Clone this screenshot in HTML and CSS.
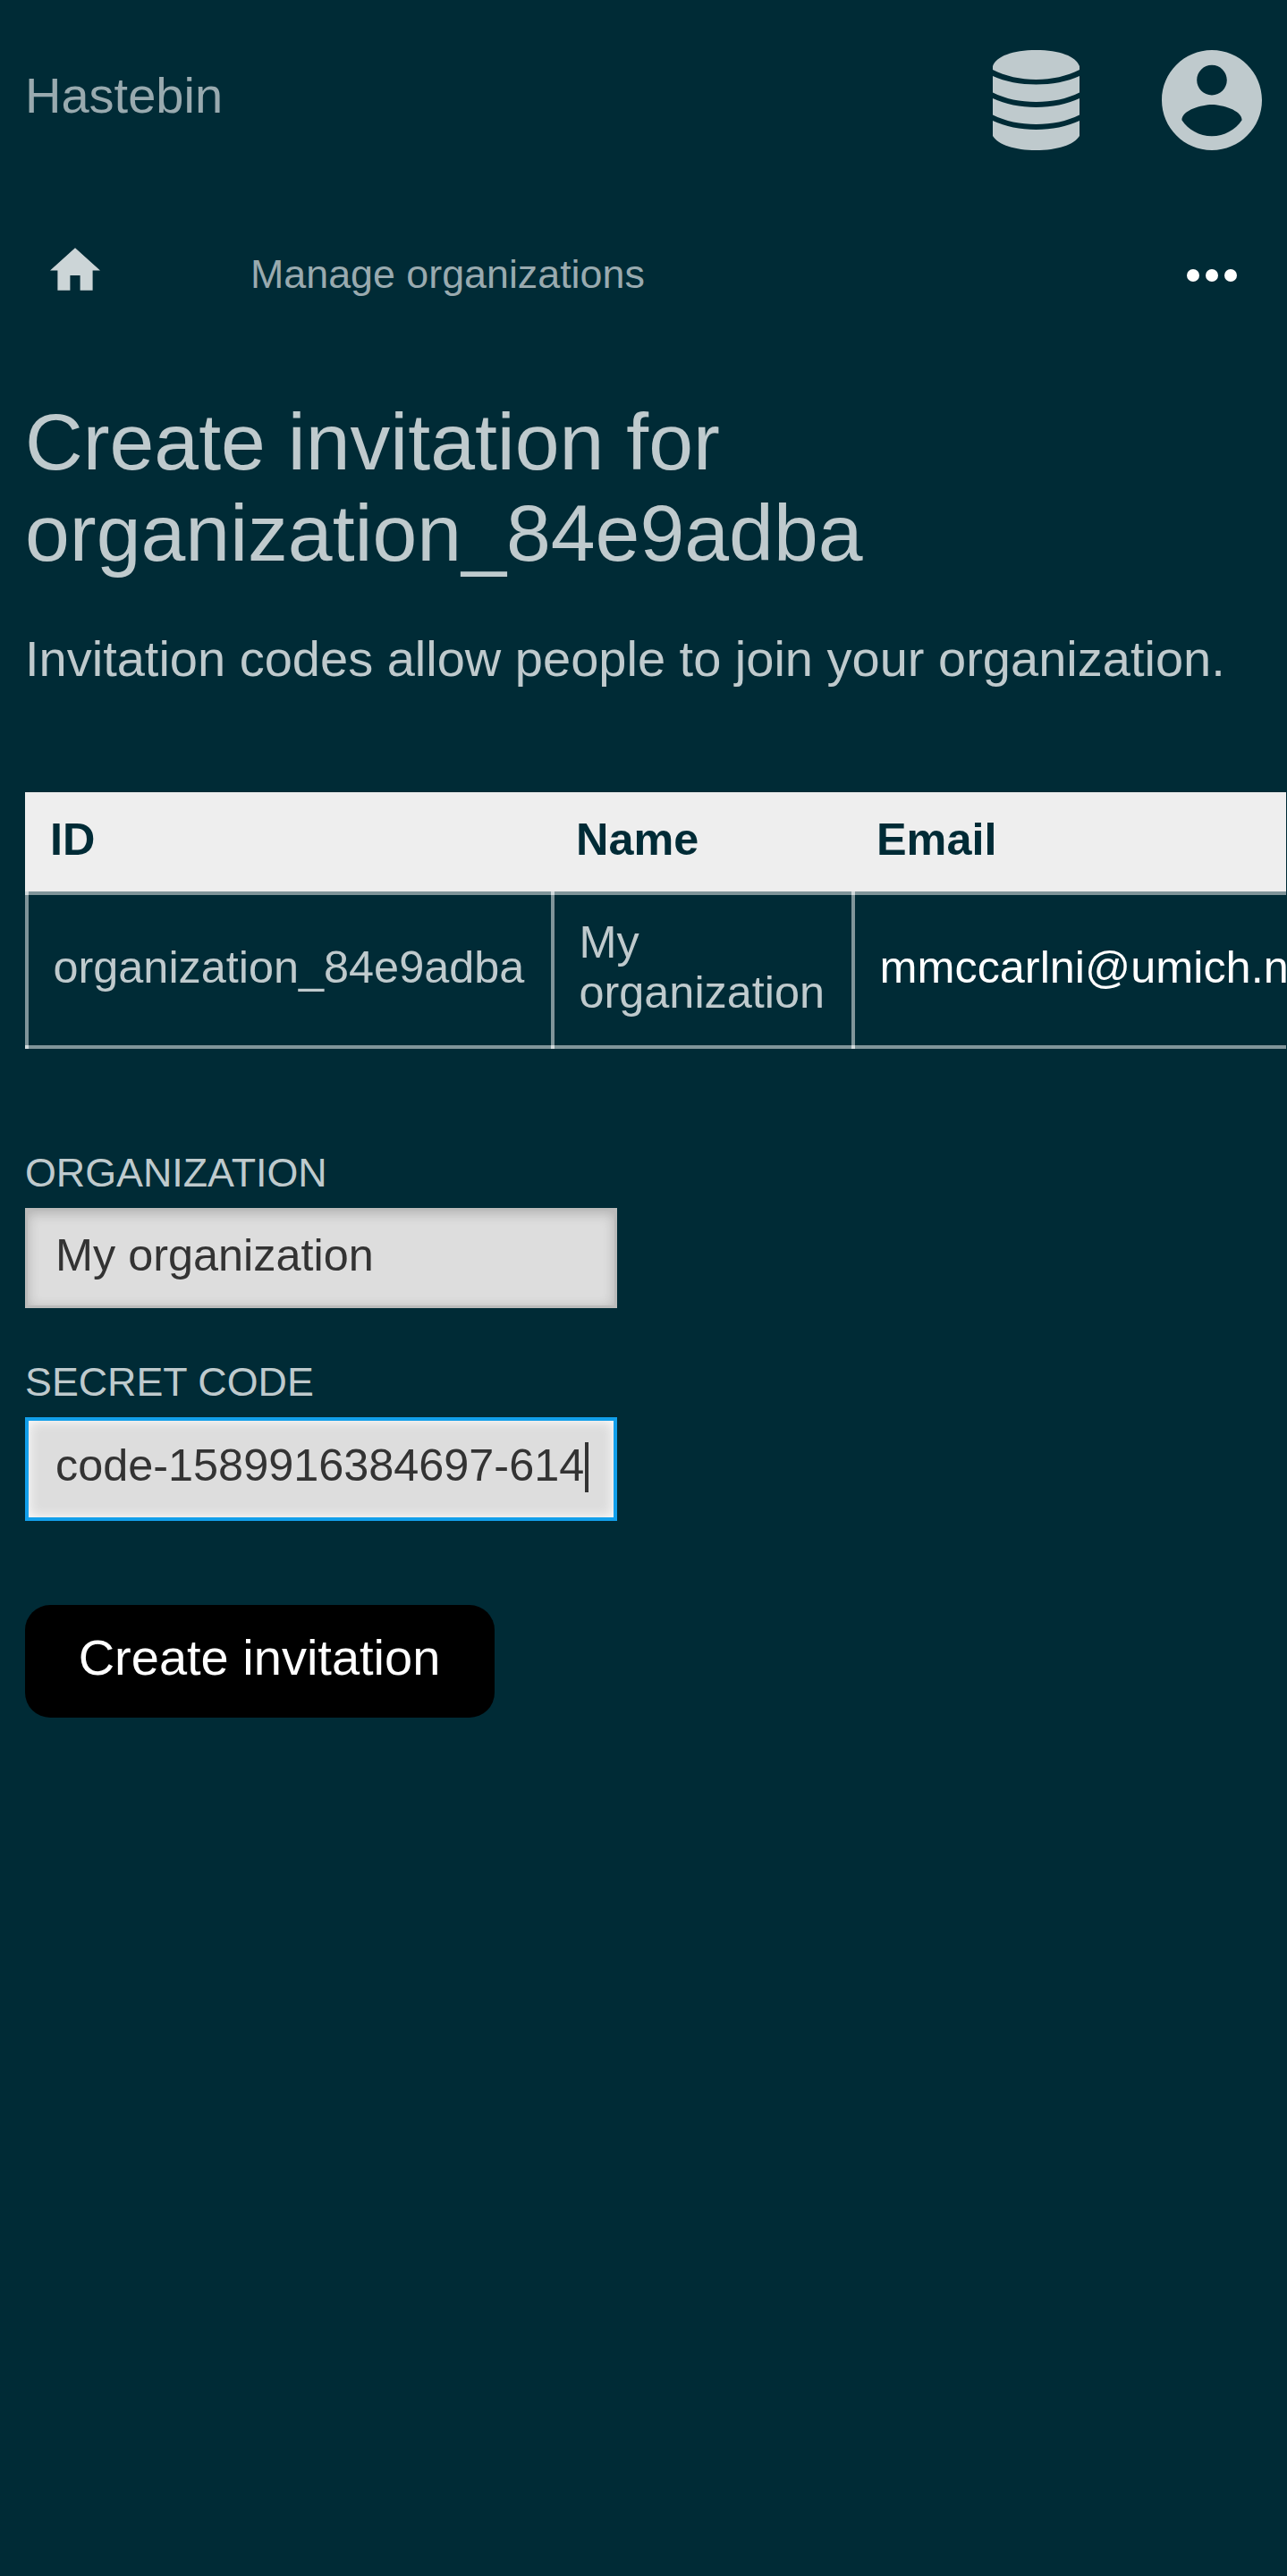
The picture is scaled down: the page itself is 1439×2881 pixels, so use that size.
FILE: index.html
```html
<!DOCTYPE html>
<html lang="en">
<head>
<meta charset="utf-8">
<title>Create invitation</title>
<link rel="stylesheet" href="styles.css">
</head>
<body>
<header class="topbar">
  <a class="brand">Hastebin</a>
  <div class="account">
    <svg class="icon-db" viewBox="0 0 97 112"><path d="M0 18C4 7 22 0 48.500 0S93 7 97 18V22C83 29 66 33 48.500 33S14 29 0 22ZM0 29C14 35.500 31 38.500 48.500 38.500S83 35.500 97 29V47.500C83 54.500 66 58 48.500 58S14 54.500 0 47.500ZM0 54C14 60.500 31 64 48.500 64S83 60.500 97 54V72.500C83 79.500 66 83 48.500 83S14 79.500 0 72.500ZM0 79C14 85.500 31 89 48.500 89S83 85.500 97 79V96C91 106 72 112 48.500 112S6 106 0 96Z"/></svg>
    <svg class="icon-user" viewBox="2 2 20 20"><path d="M12 2C6.480 2 2 6.480 2 12s4.480 10 10 10 10-4.480 10-10S17.520 2 12 2zm0 3c1.660 0 3 1.340 3 3s-1.340 3-3 3-3-1.340-3-3 1.340-3 3-3zm0 14.200c-2.500 0-4.710-1.280-6-3.220.030-1.990 4-3.080 6-3.080 1.990 0 5.970 1.090 6 3.080-1.290 1.940-3.500 3.220-6 3.220z"/></svg>
  </div>
</header>
<nav class="nav">
  <svg class="icon-home" viewBox="2 3 20 17"><path d="M10 20v-6h4v6h5v-8h3L12 3 2 12h3v8z"/></svg>
  <a class="nav-link">Manage organizations</a>
  <svg class="icon-more" viewBox="0 0 56 14"><circle cx="7" cy="7" r="7"/><circle cx="28" cy="7" r="7"/><circle cx="49" cy="7" r="7"/></svg>
</nav>
<main class="content">
  <h1 class="title">Create invitation for organization_84e9adba</h1>
  <p class="lead">Invitation codes allow people to join your organization.</p>
  <div class="table-wrap">
    <table class="table">
      <thead><tr><th class="col-id">ID</th><th class="col-name">Name</th><th class="col-email">Email</th></tr></thead>
      <tbody><tr><td>organization_84e9adba</td><td>My organization</td><td class="email">mmccarlni@umich.net</td></tr></tbody>
    </table>
  </div>
  <form class="form">
    <div class="label">ORGANIZATION</div>
    <div class="input">My organization</div>
    <div class="label label-code">SECRET CODE</div>
    <div class="input focused">code-1589916384697-614<span class="caret"></span></div>
    <div class="button">Create invitation</div>
  </form>
</main>
</body>
</html>
```
FILE: styles.css
```css
* { box-sizing: border-box; }
body {
  margin: 0;
  min-height: 2881px;
  overflow: hidden;
  background: #002b36;
  color: #bfcacd;
  font-family: "Liberation Sans", Arial, sans-serif;
  font-size: 56px;
  line-height: 63px;
}
.topbar {
  display: flex;
  justify-content: space-between;
  align-items: flex-start;
  height: 224px;
  padding: 56px 28px 0;
}
.brand { margin-top: 19px; color: #99aaaf; }
.account { display: flex; gap: 92px; fill: #bfcacd; }
.icon-db { width: 97px; height: 112px; }
.icon-user { width: 112px; height: 112px; }
.nav {
  display: flex;
  align-items: center;
  height: 168px;
  padding: 0 56px;
}
.icon-home { width: 56px; height: 48px; margin-top: -14px; fill: #ccd5d7; }
.nav-link { margin: -3px 0 0 168px; font-size: 44.8px; color: #99aaaf; }
.icon-more { width: 56px; height: 14px; margin-left: auto; fill: #fff; }
.content { padding: 51px 0 0 28px; }
.title {
  width: 1300px;
  margin: 0;
  font-size: 89.6px;
  font-weight: 400;
  line-height: 102px;
}
.lead { margin: 58px 0 0; }
.table-wrap { width: 1410px; margin-top: 118px; overflow: hidden; }
.table {
  width: 1600px;
  border-collapse: separate;
  border-spacing: 0;
  table-layout: fixed;
  font-size: 50.4px;
  line-height: 56px;
  text-align: left;
}
.table th {
  height: 111px;
  padding: 0 28px 6px;
  background: #eee;
  color: #002b36;
  line-height: 57px;
}
/* Cell rules are drawn as backgrounds so that their crossings stay lighter. */
.table td {
  height: 176px;
  padding: 4px 24px 11px 31.5px;
  background:
    linear-gradient(#d2dadc, #d2dadc) 0 0 / 4px 4px no-repeat,
    linear-gradient(#d2dadc, #d2dadc) 0 100% / 4px 4px no-repeat,
    linear-gradient(#80959a, #80959a) 0 0 / 4px 100% no-repeat,
    linear-gradient(#80959a, #80959a) 0 0 / 100% 4px no-repeat,
    linear-gradient(#80959a, #80959a) 0 100% / 100% 4px no-repeat;
}
.col-id { width: 588px; }
.col-name { width: 336px; }
.table .email { color: #fff; }
.form { margin-top: 113px; }
.label { font-size: 44.8px; line-height: 50px; }
.label-code { margin-top: 57px; }
.input {
  width: 662px;
  height: 112px;
  margin-top: 15px;
  padding: 21px 31px 0;
  border: 3px solid #bbb;
  background: #ddd;
  color: #333;
  box-shadow: inset 0 3px 14px rgba(0, 0, 0, .2);
  font-size: 50.4px;
  line-height: 57px;
  white-space: nowrap;
}
.focused {
  height: 116px;
  border: 4px solid #129fea;
  padding-left: 30px;
  box-shadow: inset 0 0 14px #fff;
}
.caret {
  display: inline-block;
  width: 4px;
  height: 56px;
  margin-left: 1px;
  vertical-align: -13px;
  background: #333;
}
.button {
  width: 525px;
  height: 126px;
  margin-top: 94px;
  padding-right: 1px;
  border-radius: 28px;
  background: #000;
  color: #fff;
  line-height: 117px;
  text-align: center;
}
```
